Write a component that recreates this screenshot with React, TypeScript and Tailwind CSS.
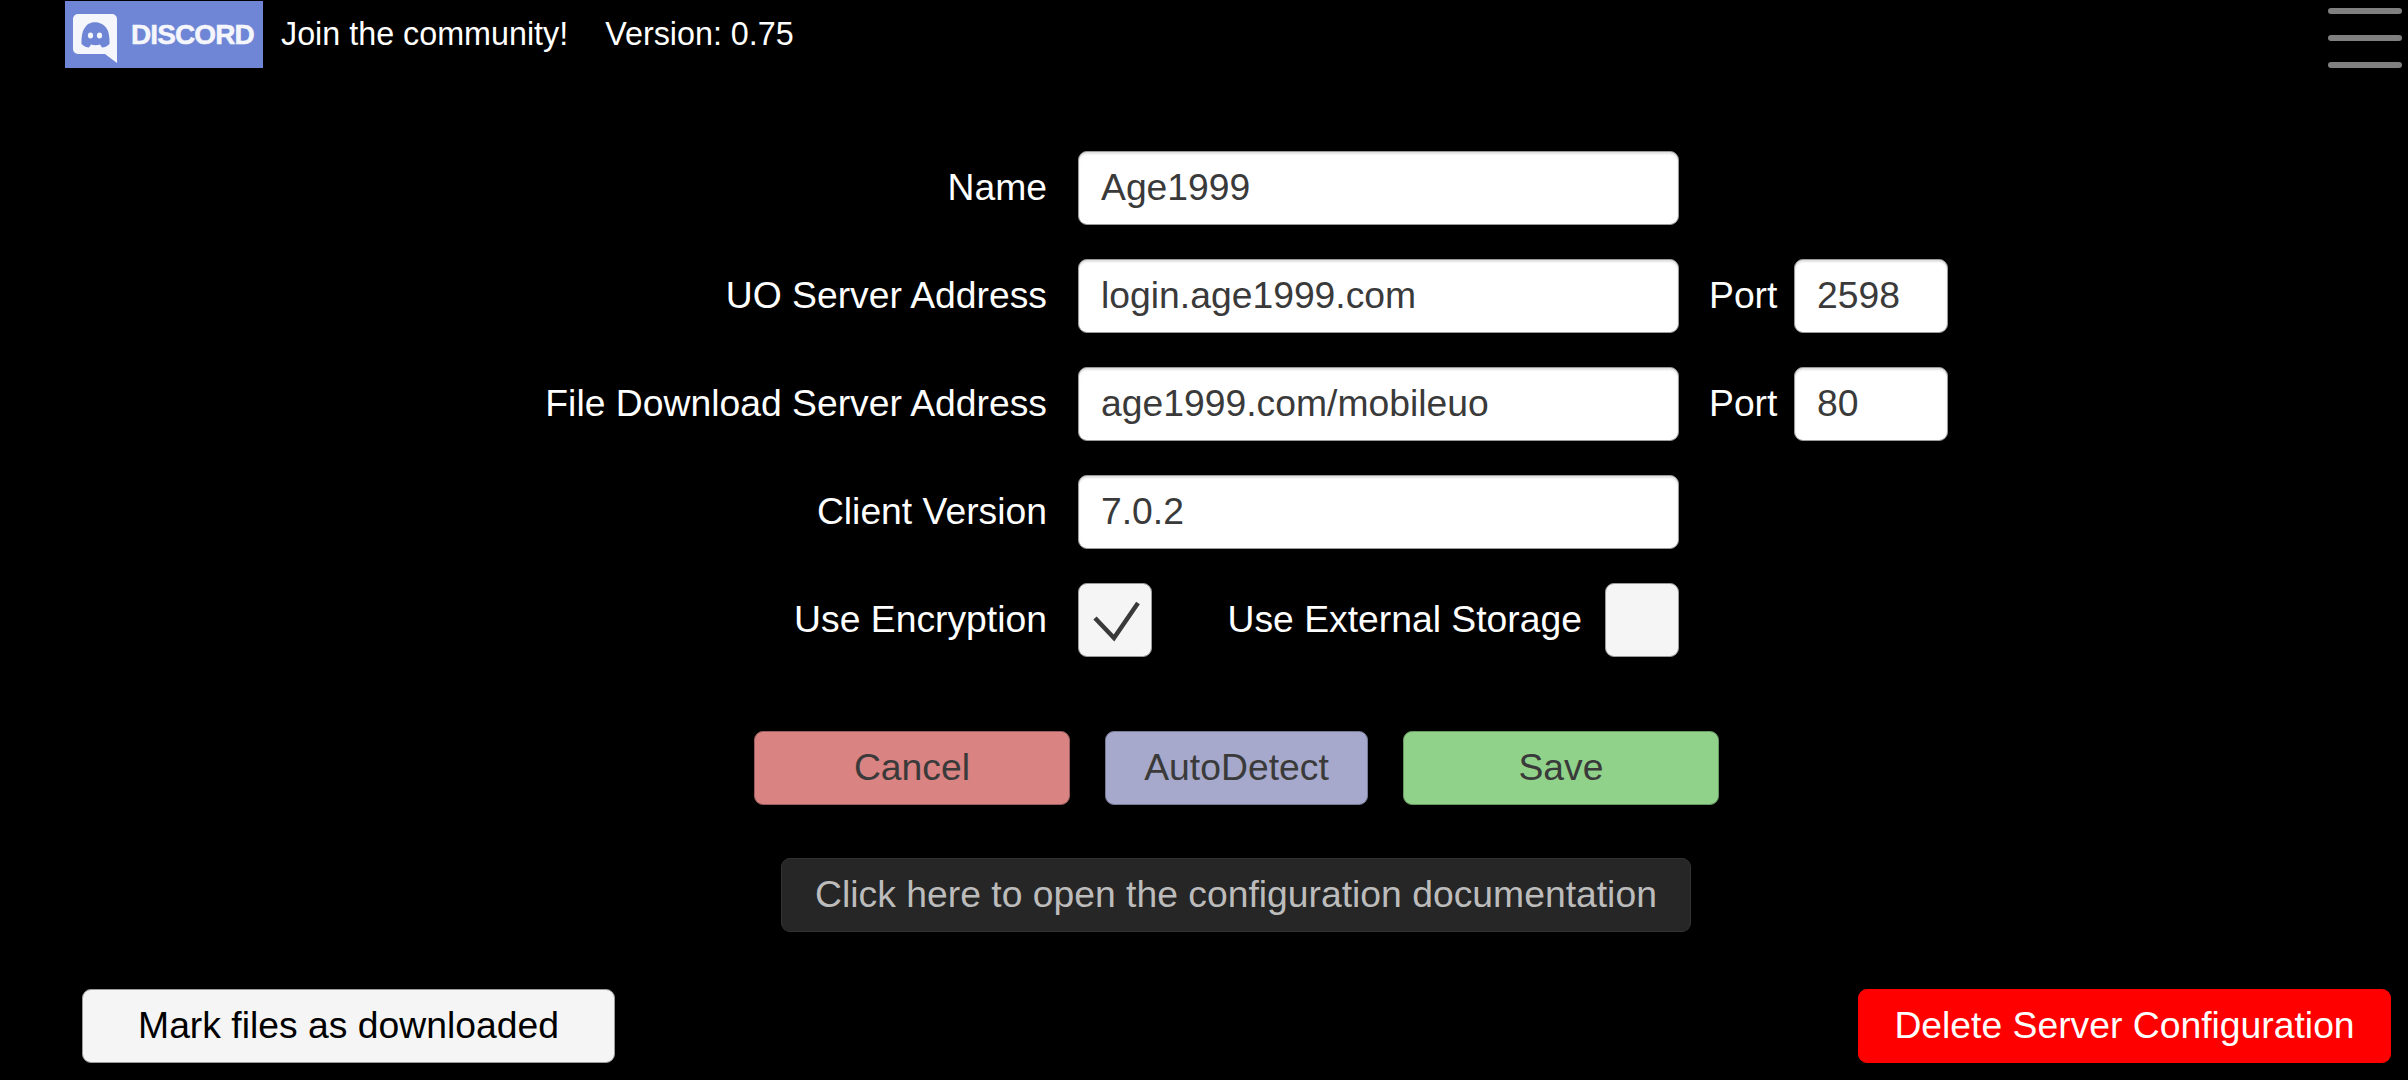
import React from 'react';

const DiscordBadge: React.FC = () => (
  <div className="flex items-center w-[198px] h-[67px] mt-px bg-[#6f85d5]">
    <svg width="46" height="50" viewBox="0 0 46 50" className="ml-[8px] mt-[8px] shrink-0">
      <path d="M5 0H39a5 5 0 0 1 5 5V49L32 40H5a5 5 0 0 1-5-5V5a5 5 0 0 1 5-5Z" fill="#f5f6fc" />
      <path
        d="M15 10c3-1.300 5-1.700 7-1.700s4 .4 7 1.700c3 2 5 4.500 6 7 1.200 4 1.700 8 1.500 13-2.500 2.500-5 3.500-7.500 3.500l-2-3c-3 1-6 1-9 0l-2 3c-2.500 0-5-1-7.500-3.500-.2-5 .3-9 1.500-13 1-2.500 3-5 5-7Z"
        fill="#6f85d5"
      />
      <ellipse cx="17.500" cy="21.500" rx="2.600" ry="3" fill="#f5f6fc" />
      <ellipse cx="26.500" cy="21.500" rx="2.600" ry="3" fill="#f5f6fc" />
    </svg>
    <span className="ml-[12px] text-[28px] leading-none font-bold text-[#f5f6fc] tracking-[-0.9px] [-webkit-text-stroke:0.5px_#f5f6fc]">
      DISCORD
    </span>
  </div>
);

const Menu: React.FC = () => (
  <div className="flex flex-col gap-[21px] w-[74px] pt-[8px]">
    <div className="h-[6px] rounded-full bg-[#808080]" />
    <div className="h-[6px] rounded-full bg-[#808080]" />
    <div className="h-[6px] rounded-full bg-[#808080]" />
  </div>
);

const Label: React.FC<{ children: React.ReactNode }> = ({ children }) => (
  <div className="w-[1047px] text-right text-white">{children}</div>
);

const Field: React.FC<{ value?: string; className: string }> = ({ value, className }) => (
  <div
    className={`flex items-center h-[74px] px-[22px] rounded-[9px] bg-white text-[#3a3a3a] border border-[#9a9a9a] shadow-[inset_0_2px_2px_rgba(0,0,0,0.12)] ${className}`}
  >
    {value}
  </div>
);

const Port: React.FC<{ value: string }> = ({ value }) => (
  <>
    <div className="w-[85px] ml-[30px] text-white">Port</div>
    <Field value={value} className="w-[154px]" />
  </>
);

const ActionButton: React.FC<{ label: string; className: string }> = ({ label, className }) => (
  <button className={`flex items-center justify-center h-[74px] rounded-[9px] border ${className}`}>{label}</button>
);

export default function App() {
  return (
    <div className="flex flex-col w-full h-[1080px] bg-black overflow-hidden font-['Liberation_Sans',Arial,sans-serif] text-[37.3px]">
      <div className="flex justify-between h-[68px] pl-[65px] pr-[6px]">
        <div className="flex items-start">
          <DiscordBadge />
          <div className="flex items-center h-[68px] ml-[18px] text-[32.3px] text-white">
            <span>Join the community!</span>
            <span className="ml-[37px]">Version: 0.75</span>
          </div>
        </div>
        <Menu />
      </div>

      <div className="flex flex-col gap-[34px] mt-[83px]">
        <div className="flex items-center gap-[31px]">
          <Label>Name</Label>
          <Field value="Age1999" className="w-[601px]" />
        </div>
        <div className="flex items-center">
          <Label>UO Server Address</Label>
          <Field value="login.age1999.com" className="w-[601px] ml-[31px]" />
          <Port value="2598" />
        </div>
        <div className="flex items-center">
          <Label>File Download Server Address</Label>
          <Field value="age1999.com/mobileuo" className="w-[601px] ml-[31px]" />
          <Port value="80" />
        </div>
        <div className="flex items-center gap-[31px]">
          <Label>Client Version</Label>
          <Field value="7.0.2" className="w-[601px]" />
        </div>
        <div className="flex items-center">
          <Label>Use Encryption</Label>
          <div className="w-[74px] h-[74px] ml-[31px] rounded-[9px] bg-[#f5f5f5] border border-[#9a9a9a]">
            <svg width="72" height="72" viewBox="0 0 72 72" fill="none">
              <path d="M16 34L35 54L59 19" stroke="#3a3a3a" strokeWidth="4.500" />
            </svg>
          </div>
          <div className="w-[430px] text-right text-white">Use External Storage</div>
          <div className="w-[74px] h-[74px] ml-[23px] rounded-[9px] bg-[#f5f5f5] border border-[#9a9a9a]" />
        </div>
      </div>

      <div className="flex gap-[35px] mt-[74px] pl-[754px]">
        <ActionButton label="Cancel" className="w-[316px] bg-[#d98383] border-[#9c5f5f] text-[#3a3a3a]" />
        <ActionButton label="AutoDetect" className="w-[263px] bg-[#a6a9cb] border-[#777a94] text-[#3a3a3a]" />
        <ActionButton label="Save" className="w-[316px] bg-[#90d28a] border-[#689863] text-[#3a3a3a]" />
      </div>

      <div className="flex mt-[53px] pl-[781px]">
        <ActionButton
          label="Click here to open the configuration documentation"
          className="w-[910px] bg-[#262626] border-[#333333] text-[#bcbcbc]"
        />
      </div>

      <div className="flex justify-between mt-[57px] pl-[82px] pr-[17px]">
        <ActionButton label="Mark files as downloaded" className="w-[533px] bg-[#f5f5f5] border-[#9a9a9a] text-black" />
        <ActionButton label="Delete Server Configuration" className="w-[533px] bg-[#ff0000] border-[#ff0000] text-white" />
      </div>
    </div>
  );
}
